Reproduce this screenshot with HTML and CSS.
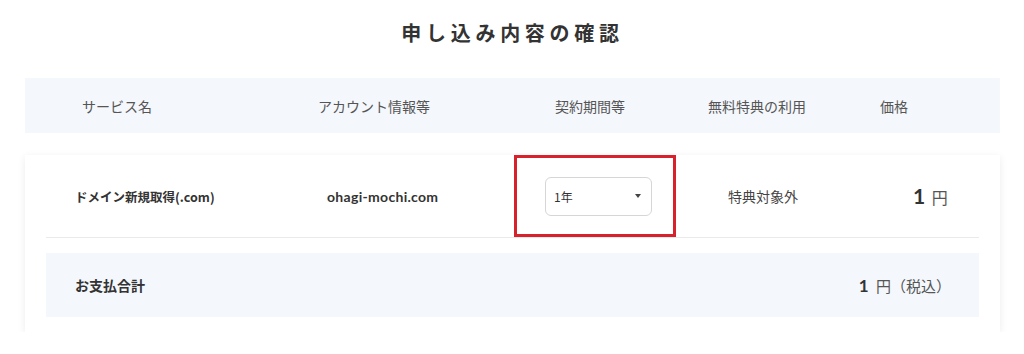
FILE: index.html
```html
<!DOCTYPE html>
<html lang="ja">
<head>
    <meta charset="UTF-8">
    <meta name="viewport" content="width=device-width, initial-scale=1.0">
    <title>申し込み内容の確認</title>
    <link rel="stylesheet" href="styles.css">
</head>
<body>

    <div id="confirm">
        <h1 class="title">申し込み内容の確認</h1>

        <div class="head-row">
            <div>サービス名</div>
            <div>アカウント情報等</div>
            <div>契約期間等</div>
            <div>無料特典の利用</div>
            <div>価格</div>
        </div>

        <div class="order-card">
            <div class="order-row">
                <div class="service">ドメイン新規取得(.com)</div>
                <div class="account">ohagi-mochi.com</div>
                <div class="term highlight">
                    <div class="select-box">
                        <span>1年</span>
                        <span class="caret"></span>
                    </div>
                </div>
                <div class="bonus">特典対象外</div>
                <div class="price"><b>1</b> 円</div>
            </div>
            <div class="total-row">
                <div class="total-label">お支払合計</div>
                <div class="total-price"><b>1</b> 円（税込）</div>
            </div>
        </div>
    </div>

</body>
</html>
```

FILE: styles.css
```css
body {
    font-family: "Noto Sans CJK JP", "Noto Sans", sans-serif;
    margin: 0;
    padding: 0;
    background-color: #fff;
    color: #333;
}
#confirm {
    width: 975px;
    margin-left: 25px;
}
.title {
    margin: 0;
    padding-top: 18px;
    line-height: 30px;
    font-size: 20px;
    font-weight: bold;
    letter-spacing: 4.7px;
    text-align: center;
    color: #333;
}
.head-row {
    margin-top: 30px;
    height: 55px;
    background-color: #f4f7fc;
    display: grid;
    grid-template-columns: 236px 237px 153px 172px 1fr;
    align-items: center;
    padding-left: 57px;
    font-size: 14px;
    color: #555;
}
.order-card {
    margin-top: 22px;
    background-color: #fff;
    padding: 0 21px 15px;
    box-shadow: 0 2px 8px rgba(0, 0, 0, 0.08);
}
.order-row {
    display: grid;
    grid-template-columns: 252px 187px 162px 239px 1fr;
    align-items: center;
    padding-left: 29px;
    border-bottom: 1px solid #eaeaea;
}
.service {
    font-size: 12.5px;
    font-weight: bold;
}
.account {
    font-family: "Lato", "Noto Sans CJK JP", sans-serif;
    font-size: 14px;
    font-weight: bold;
    letter-spacing: 0.3px;
}
.highlight {
    height: 82px;
    box-sizing: border-box;
    border: 3px solid #d7222d;
    padding-left: 28px;
    display: flex;
    align-items: center;
}
.select-box {
    width: 107px;
    height: 39px;
    box-sizing: border-box;
    border: 1px solid #d6d6d6;
    border-radius: 6px;
    display: flex;
    align-items: center;
    justify-content: space-between;
    padding: 0 10px 0 8px;
    font-size: 12px;
}
.caret {
    width: 0;
    height: 0;
    border-left: 3.5px solid transparent;
    border-right: 3.5px solid transparent;
    border-top: 4px solid #444;
}
.bonus {
    padding-left: 52px;
    font-size: 14px;
    color: #444;
}
.price {
    margin-left: -2px;
    font-size: 16px;
    color: #555;
}
.price b {
    font-family: "Lato", sans-serif;
    font-size: 21px;
    color: #333;
    margin-right: 3px;
}
.total-row {
    margin-top: 15px;
    height: 64px;
    background-color: #f4f7fc;
    display: flex;
    align-items: center;
    justify-content: space-between;
    padding: 0 28px 0 29px;
}
.total-label {
    font-size: 14px;
    font-weight: bold;
}
.total-price {
    font-size: 15px;
    color: #555;
}
.total-price b {
    font-family: "Lato", sans-serif;
    font-size: 17px;
    color: #333;
    margin-right: 4px;
}
```
